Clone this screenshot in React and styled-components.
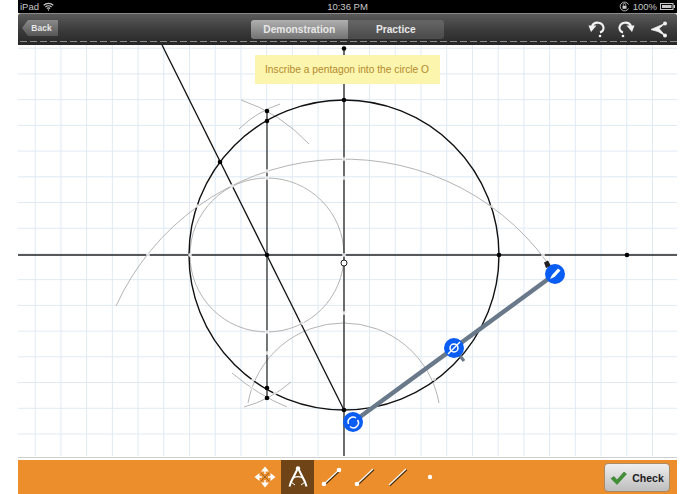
import React from 'react'
import styled, { createGlobalStyle } from 'styled-components'

const Global = createGlobalStyle`
  html, body { margin: 0; padding: 0; background: #fff; }
  body { font-family: "Liberation Sans", Arial, sans-serif; }
`

const Page = styled.div`
  width: 659px;
  height: 494px;
  margin: 0 18px;
  display: flex;
  flex-direction: column;
  overflow: hidden;
`

const StatusBar = styled.div`
  height: 13px;
  flex: none;
  background: #000;
  color: #c8c8c8;
  font-size: 9.5px;
  display: grid;
  grid-template-columns: 1fr auto 1fr;
  align-items: center;
  padding: 0 2px 0 2px;
`

const StatusGroup = styled.div`
  display: flex;
  align-items: center;
  gap: ${p => p.$gap || 4}px;
  justify-content: ${p => (p.$end ? 'flex-end' : 'flex-start')};
`

const Toolbar = styled.div`
  position: relative;
  height: 32px;
  flex: none;
  box-sizing: border-box;
  padding: 6px 9px 0 4px;
  display: grid;
  grid-template-columns: 1fr auto 1fr;
  align-items: start;
  border-radius: 3px 3px 0 0;
  border-top: 1px solid #8a8a8a;
  background: linear-gradient(#5a5a5a, #3c3c3c 50%, #262626);
`

const Stitches = styled.div`
  position: absolute;
  left: 2px;
  right: 0;
  bottom: 3px;
  height: 1px;
  background: repeating-linear-gradient(90deg, #8b8b8b 0 7px, transparent 7px 10px);
`

const BackButton = styled.div`
  width: 36px;
  height: 16px;
  color: #e6e6e6;
  font-size: 8.5px;
  font-weight: bold;
  display: flex;
  align-items: center;
  justify-content: center;
  padding-left: 3px;
  box-sizing: border-box;
  clip-path: polygon(0 50%, 6px 0, 100% 0, 100% 100%, 6px 100%);
  background: linear-gradient(#8a8a8a, #565656);
`

const Segments = styled.div`
  display: flex;
  width: 193px;
  height: 19px;
  margin-left: 5px;
  border-radius: 3px;
  overflow: hidden;
`

const Segment = styled.div`
  flex: 1;
  display: flex;
  align-items: center;
  justify-content: center;
  font-size: 10.2px;
  font-weight: bold;
  color: #e8e8e8;
  background: ${p => (p.$active
    ? 'linear-gradient(#b0b0b0, #727272)'
    : 'linear-gradient(#666, #4a4a4a)')};
`

const ToolbarActions = styled.div`
  display: flex;
  justify-content: flex-end;
  gap: 11px;
  margin-top: 1px;
  color: #f2f2f2;
`

const Canvas = styled.div`
  position: relative;
  flex: 1;
  background: #fff;
`

const Drawing = styled.svg`
  display: block;
  width: 100%;
  height: 100%;
`

const Note = styled.div`
  position: absolute;
  left: 237px;
  top: 10px;
  width: 185px;
  height: 29px;
  box-sizing: border-box;
  padding-left: 10px;
  display: flex;
  align-items: center;
  background: #fbf5ae;
  color: #b58a2c;
  font-size: 10.25px;
`

const BottomBar = styled.div`
  position: relative;
  height: 34px;
  flex: none;
  background: #ec8e2c;
  display: flex;
  align-items: stretch;
  padding-left: 231px;
`

const ToolSlot = styled.div`
  width: ${p => p.$w || 33}px;
  display: flex;
  align-items: center;
  justify-content: center;
  background: ${p => (p.$active ? '#6f4517' : 'transparent')};
`

const CheckButton = styled.div`
  position: absolute;
  right: 7px;
  top: 3px;
  width: 66px;
  height: 29px;
  box-sizing: border-box;
  border-radius: 4px;
  border: 1px solid #a98a66;
  background: linear-gradient(#efefef, #bdbdbd);
  display: flex;
  align-items: center;
  justify-content: center;
  gap: 5px;
  font-size: 10.5px;
  font-weight: bold;
  color: #1d1d1d;
`

const ShareGlyph = styled.svg`
  margin-left: 4px;
`

const arc = (x1, y1, x2, y2, r, sweep = 1) => `M${x1} ${y1}A${r} ${r} 0 0 ${sweep} ${x2} ${y2}`

const gridX = Array.from({ length: 26 }, (_, i) => 35.2 + i * 25.72)
const gridY = Array.from({ length: 16 }, (_, i) => 48.2 + i * 25.72)

const grayPaths = [
  'M116 306A251 251 0 0 1 547 262',
  arc(267, 178, 267, 332, 77),
  arc(267, 332, 267, 178, 77),
  'M248 403A97 97 0 0 1 439 403',
  'M241 100Q280 113 309 144',
  'M239 129Q256 112 280 104',
  'M232 373Q258 395 287 407',
  'M244 407Q270 400 291 382',
]

const blackDots = [
  [344, 100], [267, 111], [267, 121], [220, 162], [267, 255], [344, 410],
  [499, 255], [267, 388], [267, 398], [344, 48.5], [627, 255],
]

const crossings = [
  [148, 255], [190, 255], [344, 255], [344, 159], [267, 171], [267, 178], [232, 186], [197, 206],
  [492, 206], [543, 255], [267, 332], [302, 323], [344, 313], [267, 353], [253, 380], [251, 388],
  [275, 393], [434, 379], [344, 178],
]

const Geometry = () => (
  <Drawing viewBox="18 45 659 415">
    {gridX.map(x => <line key={x} x1={x} x2={x} y1="45" y2="456" stroke="#dfeaf4" strokeWidth="1" />)}
    {gridY.map(y => <line key={y} x1="18" x2="677" y1={y} y2={y} stroke="#dfeaf4" strokeWidth="1" />)}
    <line x1="18" x2="677" y1="457.5" y2="457.5" stroke="#cfcfcf" strokeWidth="1" />

    {grayPaths.map(d => <path key={d} d={d} fill="none" stroke="#b4b4b4" strokeWidth="1" />)}

    <line x1="18" x2="677" y1="255" y2="255" stroke="#222" strokeWidth="1.3" />
    <line x1="344" x2="344" y1="48" y2="456" stroke="#333" strokeWidth="1.4" />
    <line x1="267" x2="267" y1="111" y2="398" stroke="#222" strokeWidth="1.2" />
    <line x1="162" x2="344" y1="45" y2="410" stroke="#111" strokeWidth="1.3" />
    <circle cx="344" cy="255" r="155" fill="none" stroke="#111" strokeWidth="1.4" />

    {crossings.map(([x, y]) => (
      <g key={`${x}-${y}`}>
        <circle cx={x} cy={y} r="1.8" fill="#fff" />
        <circle cx={x} cy={y} r="0.8" fill="#b5b5b5" />
      </g>
    ))}
    {blackDots.map(([x, y]) => <circle key={`${x}-${y}`} cx={x} cy={y} r="2.3" fill="#000" />)}
    <circle cx="344" cy="263" r="3" fill="#fff" stroke="#222" strokeWidth="1" />

    <path d="M544 262.5L548 260.5L551 266L546 268Z" fill="#222" />
    <line x1="353" y1="422" x2="555" y2="274" stroke="#69798a" strokeWidth="4.5" />
    <line x1="454" y1="348" x2="464" y2="361" stroke="#69798a" strokeWidth="3" />

    <circle cx="353" cy="422" r="10" fill="#0a5df2" />
    <path d="M348.5 424A5 5 0 0 1 356 418M357.5 420A5 5 0 0 1 350 426.5" fill="none" stroke="#fff" strokeWidth="1.5" />
    <circle cx="454" cy="348" r="10" fill="#0a5df2" />
    <circle cx="454" cy="348" r="4" fill="none" stroke="#fff" strokeWidth="1.5" />
    <line x1="448" y1="354" x2="460" y2="342" stroke="#fff" strokeWidth="1.5" />
    <circle cx="555" cy="274" r="10" fill="#0a5df2" />
    <path d="M550 279L552 275L558 268.5L560.5 270.5L554.5 277Z" fill="#fff" />
  </Drawing>
)

const WifiIcon = () => (
  <svg width="11" height="9" viewBox="0 0 11 9" fill="none" stroke="#c8c8c8" strokeWidth="1.2">
    <path d="M.7 3.2A7 7 0 0 1 10.3 3.2M2.4 5A4.5 4.5 0 0 1 8.6 5M4 6.6A2 2 0 0 1 7 6.6" />
    <circle cx="5.5" cy="8" r=".7" fill="#c8c8c8" stroke="none" />
  </svg>
)

const LockIcon = () => (
  <svg width="11" height="11" viewBox="0 0 11 11" fill="none" stroke="#c8c8c8">
    <path d="M9.5 7.5A4.4 4.4 0 1 1 9.5 3.5" strokeWidth=".9" />
    <rect x="3.5" y="4.8" width="4" height="3" fill="#c8c8c8" stroke="none" />
    <path d="M4.3 4.8V3.6A1.2 1.2 0 0 1 6.7 3.6V4.8" strokeWidth=".8" />
  </svg>
)

const BatteryIcon = () => (
  <svg width="15" height="7" viewBox="0 0 15 7">
    <rect x=".5" y=".5" width="12.5" height="6" fill="none" stroke="#c8c8c8" />
    <rect x="2" y="2" width="9.5" height="3" fill="#c8c8c8" />
    <rect x="13.5" y="2" width="1.5" height="3" fill="#c8c8c8" />
  </svg>
)

const TurnIcon = ({ flip }) => (
  <svg width="18" height="17" viewBox="0 0 18 17" style={flip ? { transform: 'scaleX(-1)' } : undefined}>
    <path d="M4 5A6 5.5 0 0 1 15.5 6.5C15.8 9 14 11 12 11.5" fill="none" stroke="currentColor" strokeWidth="2.1" />
    <path d="M0.5 4.5L8.5 4.5L3 11Z" fill="currentColor" />
    <circle cx="12" cy="15" r="1.3" fill="currentColor" />
  </svg>
)

const ShareIcon = () => (
  <ShareGlyph width="18" height="17" viewBox="0 0 18 17" fill="currentColor">
    <path d="M15 2.5L1 8.5L8 10.5L15 14.5L9 7.5Z" stroke="currentColor" strokeWidth=".8" />
    <circle cx="15" cy="2.5" r="2" />
    <circle cx="15" cy="14.5" r="2" />
  </ShareGlyph>
)

const MoveIcon = () => (
  <svg width="22" height="22" viewBox="0 0 22 22" fill="#fff">
    <path d="M7 7L15 15M15 7L7 15" stroke="#8a5a24" strokeWidth=".8" />
    <path d="M11 .5L15 5.5H7ZM11 21.5L7 16.5H15ZM.5 11L5.5 7V15ZM21.5 11L16.5 15V7Z" />
    <path d="M11 5V8M11 14V17M5 11H8M14 11H17" stroke="#fff" strokeWidth="1.4" />
  </svg>
)

const CompassIcon = () => (
  <svg width="20" height="24" viewBox="0 0 20 24" fill="none" stroke="#fff" strokeWidth="2">
    <circle cx="10" cy="3.5" r="2.2" fill="#fff" stroke="none" />
    <path d="M9 5L3 17L1.5 21.5M11 5L17 17L18.5 21.5" />
    <path d="M4.5 13.5C7 11 13 11 15.5 13.5" strokeWidth="1.4" />
    <path d="M3 17L7 20M17 17L13 20" strokeWidth="1" />
  </svg>
)

const SegmentIcon = ({ start, end }) => (
  <svg width="22" height="20" viewBox="0 0 22 20">
    <line x1="3" y1="18" x2="20" y2="2" stroke="#3a2408" strokeWidth="2" transform="translate(.6 .6)" />
    <line x1="3" y1="18" x2="20" y2="2" stroke="#fff" strokeWidth="1.2" />
    {start && <circle cx="4" cy="17" r="2.3" fill="#fff" />}
    {end && <circle cx="19" cy="3" r="2.3" fill="#fff" />}
  </svg>
)

const PointIcon = () => (
  <svg width="8" height="8" viewBox="0 0 8 8"><circle cx="4" cy="4" r="2.2" fill="#fff" /></svg>
)

const CheckIcon = () => (
  <svg width="17" height="14" viewBox="0 0 17 14">
    <path d="M1 7.5L4 5.5L7 9L14 1L16.5 3L7 13.5Z" fill="#3f9133" stroke="#2e6d26" strokeWidth=".5" />
  </svg>
)

export default function App () {
  return (
    <>
      <Global />
      <Page>
        <StatusBar>
          <StatusGroup><span>iPad</span><WifiIcon /></StatusGroup>
          <span>10:36 PM</span>
          <StatusGroup $end $gap={3}><LockIcon /><span>100%</span><BatteryIcon /></StatusGroup>
        </StatusBar>
        <Toolbar>
          <BackButton>Back</BackButton>
          <Segments>
            <Segment $active>Demonstration</Segment>
            <Segment>Practice</Segment>
          </Segments>
          <ToolbarActions>
            <TurnIcon />
            <TurnIcon flip />
            <ShareIcon />
          </ToolbarActions>
          <Stitches />
        </Toolbar>
        <Canvas>
          <Geometry />
          <Note>Inscribe a pentagon into the circle O</Note>
        </Canvas>
        <BottomBar>
          <ToolSlot $w={32}><MoveIcon /></ToolSlot>
          <ToolSlot $active><CompassIcon /></ToolSlot>
          <ToolSlot><SegmentIcon start end /></ToolSlot>
          <ToolSlot><SegmentIcon start /></ToolSlot>
          <ToolSlot><SegmentIcon /></ToolSlot>
          <ToolSlot><PointIcon /></ToolSlot>
          <CheckButton><CheckIcon />Check</CheckButton>
        </BottomBar>
      </Page>
    </>
  )
}
